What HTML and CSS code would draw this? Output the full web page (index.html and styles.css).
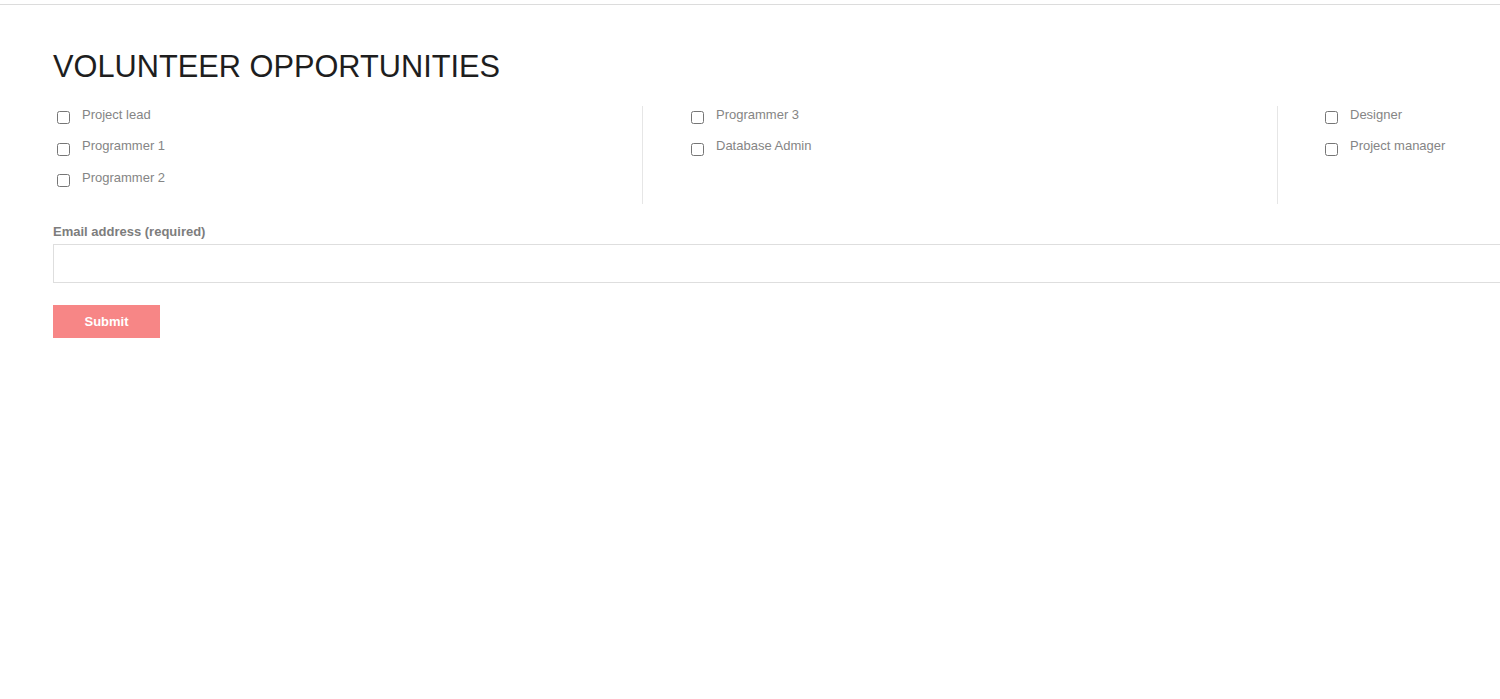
FILE: index.html
```html
<!DOCTYPE html>
<html lang="en">
<head>
<meta charset="utf-8">
<title>Volunteer Opportunities</title>
<link rel="stylesheet" href="styles.css">
</head>
<body>
<div class="topbar"></div>
<main class="page">
  <h1 class="title">VOLUNTEER OPPORTUNITIES</h1>
  <form class="form">
    <div class="columns">
      <div class="col">
        <label class="opt"><input type="checkbox"><span>Project lead</span></label>
        <label class="opt"><input type="checkbox"><span>Programmer 1</span></label>
        <label class="opt"><input type="checkbox"><span>Programmer 2</span></label>
      </div>
      <div class="col col-div">
        <label class="opt"><input type="checkbox"><span>Programmer 3</span></label>
        <label class="opt"><input type="checkbox"><span>Database Admin</span></label>
      </div>
      <div class="col col-div col-last">
        <label class="opt"><input type="checkbox"><span>Designer</span></label>
        <label class="opt"><input type="checkbox"><span>Project manager</span></label>
      </div>
    </div>
    <label class="field-label" for="email">Email address (required)</label>
    <input class="field" id="email" type="email">
    <button class="submit" type="button">Submit</button>
  </form>
</main>
</body>
</html>
```
FILE: styles.css
```css
html, body {
  margin: 0;
  padding: 0;
  background: #fff;
  overflow-x: hidden;
}
body {
  font-family: "Liberation Sans", Arial, sans-serif;
}
.topbar {
  height: 4px;
  border-bottom: 1px solid #dcdcdc;
}
.page {
  width: 1859px;
  padding: 0 0 0 53px;
}
.title {
  margin: 45px 0 0;
  font-size: 30.75px;
  line-height: 34px;
  font-weight: normal;
  color: #1e1e1e;
  letter-spacing: 0;
}
.form {
  display: flex;
  flex-direction: column;
  align-items: flex-start;
}
.columns {
  display: flex;
  margin-top: 22px;
  width: 100%;
}
.col {
  width: 589px;
  flex: none;
  padding-bottom: 3px;
}
.col-div {
  width: 590px;
  border-left: 1px solid #e6e6e6;
  padding-left: 44px;
}
.col-last {
  padding-left: 43px;
}
.opt {
  display: flex;
  align-items: flex-start;
  height: 31.5px;
  font-size: 13px;
  line-height: 16px;
  color: #858585;
}
.opt input {
  width: 13px;
  height: 13px;
  margin: 5px 12px 0 4px;
}
.opt span {
  padding-top: 0.5px;
}
.field-label {
  margin-top: 20px;
  font-size: 13px;
  line-height: 16px;
  font-weight: bold;
  color: #7d7d7d;
}
.field {
  box-sizing: border-box;
  width: 100%;
  height: 39px;
  margin: 4px 0 0;
  border: 1px solid #dedede;
  background: #fff;
  padding: 0 10px;
  outline: none;
}
.submit {
  margin-top: 22px;
  width: 107px;
  height: 33px;
  border: none;
  background: #f78686;
  color: #fff;
  font-family: "Liberation Sans", Arial, sans-serif;
  font-size: 13px;
  font-weight: bold;
  padding: 0;
}
```
